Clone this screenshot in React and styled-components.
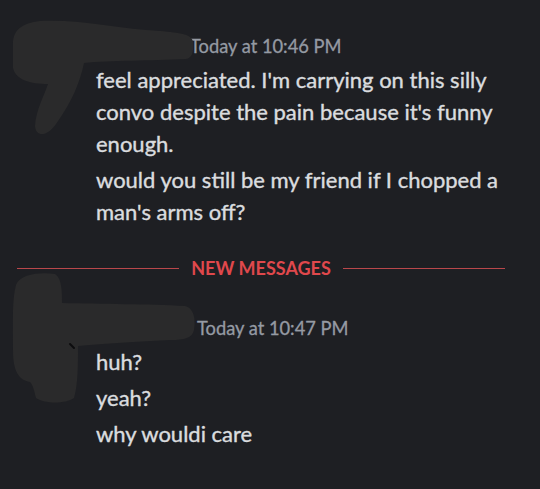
import styled, { createGlobalStyle } from "styled-components";

const Global = createGlobalStyle`
  html, body {
    margin: 0;
    background: #1e1f23;
  }
  body {
    font-family: "Lato", "Noto Sans", sans-serif;
    -webkit-font-smoothing: antialiased;
  }
`;

const Page = styled.div`
  position: relative;
  min-height: 489px;
  padding: 30px 24px 0 0;
  box-sizing: border-box;
  background: #1e1f23;
`;

const Group = styled.section`
  padding-left: 96px;
`;

const Header = styled.div`
  display: flex;
  align-items: center;
  height: 32px;
  padding-left: ${({ indent }) => indent}px;
`;

const Timestamp = styled.span`
  font-size: 18.3px;
  color: #959aa3;
  -webkit-text-stroke: 0.3px #959aa3;
`;

const Message = styled.p`
  margin: 0;
  padding: 2px 0;
  font-size: 22px;
  line-height: 32px;
  color: #dadcdf;
  -webkit-text-stroke: 0.4px #dadcdf;
`;

const Divider = styled.div`
  display: flex;
  align-items: center;
  gap: 12px;
  height: 24px;
  margin: 26px 11px 32px 17px;

  &::before,
  &::after {
    content: "";
    flex: 1;
    height: 1px;
    background: #b9474b;
  }
`;

const DividerLabel = styled.span`
  font-size: 18px;
  font-weight: 700;
  color: #e0484c;
`;

const Redaction = styled.svg`
  position: absolute;
  top: 0;
  left: 0;
  width: 200px;
  height: 420px;
  pointer-events: none;
`;

const Scribbles = () => (
  <Redaction viewBox="0 0 200 420">
    <g fill="#2a2a2b">
      <path d="M 13 44 C 13 30, 22 23, 40 21 C 80 19, 120 29, 160 31 C 180 33, 192 34, 193 42 C 194 52, 192 58, 186 59 C 150 61, 110 60, 84 63 C 80 82, 72 102, 56 124 C 48 136, 36 138, 35 126 C 36 110, 44 96, 48 84 C 30 84, 16 80, 13 68 Z" />
      <path d="M 16 285 C 20 274, 40 272, 55 274 C 62 278, 62 292, 62 303 C 100 304, 150 304, 185 306 C 194 308, 196 320, 194 330 C 192 338, 185 340, 170 340 C 130 342, 100 344, 78 346 C 78 365, 78 385, 74 398 C 65 404, 45 404, 36 398 C 34 390, 33 385, 30 382 C 18 380, 13 370, 13 350 C 13 320, 12 300, 16 285 Z" />
    </g>
    <path d="M 70 344 L 74 348" stroke="#0c0c0e" strokeWidth="2" strokeLinecap="round" />
  </Redaction>
);

const groups = [
  {
    time: "Today at 10:46 PM",
    indent: 94,
    messages: [
      "feel appreciated. I'm carrying on this silly convo despite the pain because it's funny enough.",
      "would you still be my friend if I chopped a man's arms off?",
    ],
  },
  {
    time: "Today at 10:47 PM",
    indent: 101,
    messages: ["huh?", "yeah?", "why wouldi care"],
  },
];

const MessageGroup = ({ time, indent, messages }) => (
  <Group>
    <Header indent={indent}>
      <Timestamp>{time}</Timestamp>
    </Header>
    {messages.map((text) => (
      <Message key={text}>{text}</Message>
    ))}
  </Group>
);

export default function App() {
  const [first, second] = groups;
  return (
    <Page>
      <Global />
      <MessageGroup {...first} />
      <Divider>
        <DividerLabel>NEW MESSAGES</DividerLabel>
      </Divider>
      <MessageGroup {...second} />
      <Scribbles />
    </Page>
  );
}
